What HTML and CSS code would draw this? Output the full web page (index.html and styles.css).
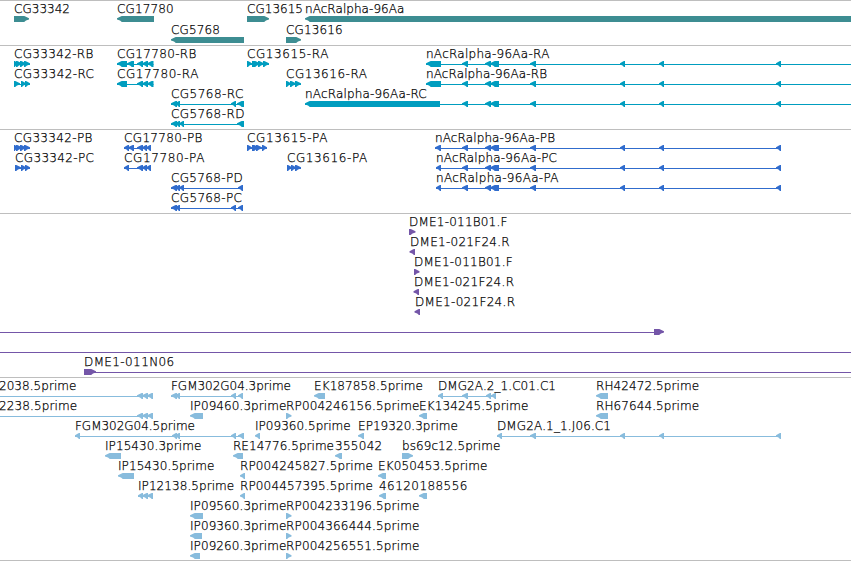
FILE: index.html
```
<!DOCTYPE html>
<html lang="en">
<head>
  <meta charset="UTF-8">
  <title>nAcRalpha-96Aa region</title>
  <link rel="stylesheet" href="styles.css">
</head>
<body>
  <main class="browser">
    <section class="track track-gene"><svg id="genes" width="851" height="44"></svg></section>
    <section class="track track-mrna"><svg id="mrna" width="851" height="83"></svg></section>
    <section class="track track-cds"><svg id="cds" width="851" height="83"></svg></section>
    <section class="track track-bac"><svg id="bac" width="851" height="163"></svg></section>
    <section class="track track-est"><svg id="est" width="851" height="182"></svg></section>
  </main>
  <script src="tracks.js"></script>
</body>
</html>
```

FILE: styles.css
```
body {
  margin: 0;
  background: #fff;
}

.browser {
  display: flex;
  flex-direction: column;
  width: 851px;
  border-bottom: 1px solid #bebebe;
  overflow: hidden;
}

.track {
  border-top: 1px solid #bebebe;
}

.track svg {
  display: block;
}

.label {
  font-family: "DejaVu Sans", sans-serif;
  font-size: 12px;
  font-weight: 200;
  fill: #000;
  stroke: #000;
  stroke-width: 0.25px;
}

.track-gene { color: #3d8d92; }
.track-mrna { color: #009dbf; }
.track-cds { color: #306ccd; }
.track-bac { color: #7456a8; }
.track-est { color: #88bcdd; }

.exon,
.intron {
  fill: currentColor;
}
```

FILE: tracks.js
```
const NS = 'http://www.w3.org/2000/svg';

// exons shared by the nAcRalpha-96Aa transcripts
const tail = [[462, 468], [485, 491], [490, 499], [530, 536], [620, 625], [659, 664], [776, 781]];
const cg17780 = [[137, 143], [142, 148], [147, 153.5]];
const cg17780p = [[137, 143], [142, 147], [146, 151]];

// [row, label, label x, label end, direction, exons, line start, line end]
const tracks = {
  genes: [
    [0, 'CG33342', 14, 69.3, 1, [[14, 29]]],
    [0, 'CG17780', 117, 173, -1, [[117, 154]]],
    [0, 'CG13615', 247, 302.3, 1, [[247, 269]]],
    [0, 'nAcRalpha-96Aa', 305, 403.7, -1, [[305, 851]]],
    [1, 'CG5768', 171, 219.3, -1, [[171, 244]]],
    [1, 'CG13616', 286, 342, 1, [[286, 301]]]
  ],
  mrna: [
    [0, 'CG33342-RB', 14, 92.7, 1, [[14, 18], [16, 22], [20, 26], [24, 30]]],
    [0, 'CG17780-RB', 117, 195.7, -1, [[117, 127], [127, 134], ...cg17780]],
    [0, 'CG13615-RA', 247, 327.7, 1, [[247, 252], [252, 260], [258, 264], [263, 269]]],
    [0, 'nAcRalpha-96Aa-RA', 426, 548.7, -1, [[426, 441], ...tail], 426, 851],
    [1, 'CG33342-RC', 14, 93.3, 1, [[14, 20], [21, 26], [25, 30]]],
    [1, 'CG17780-RA', 117, 197.7, -1, [[117, 127], ...cg17780]],
    [1, 'CG13616-RA', 286, 366.3, 1, [[286, 291], [290, 296], [295, 301]]],
    [1, 'nAcRalpha-96Aa-RB', 426, 546.3, -1, [[426, 441], ...tail], 426, 851],
    [2, 'CG5768-RC', 171, 242.7, -1, [[171, 177], [175, 180], [231, 236], [237, 244]]],
    [2, 'nAcRalpha-96Aa-RC', 305, 426, -1, [[305, 440], ...tail], 305, 851],
    [3, 'CG5768-RD', 171, 243.7, -1, [[171, 177], [175, 180], [179, 184], [237, 244]]]
  ],
  cds: [
    [0, 'CG33342-PB', 14, 91.7, 1, [[14, 18], [16, 22], [20, 26], [24, 30]]],
    [0, 'CG17780-PB', 124, 201.7, -1, [[124, 129], [128, 134], ...cg17780p]],
    [0, 'CG13615-PA', 247, 326.7, 1, [[247, 252], [252, 259], [256, 262], [262, 267]]],
    [0, 'nAcRalpha-96Aa-PB', 435, 554.3, -1, [[435, 441], ...tail]],
    [1, 'CG33342-PC', 15, 93.3, 1, [[15, 21], [21, 26], [25, 30]]],
    [1, 'CG17780-PA', 124, 203.7, -1, [[124, 129], ...cg17780p]],
    [1, 'CG13616-PA', 287, 366.5, 1, [[287, 292], [291, 296], [295, 301]]],
    [1, 'nAcRalpha-96Aa-PC', 436, 556.3, -1, [[436, 441], ...tail]],
    [2, 'CG5768-PD', 171, 242, -1, [[171, 177], [175, 180], [179, 184], [238, 243]]],
    [2, 'nAcRalpha-96Aa-PA', 436, 557.7, -1, [[436, 441], ...tail]],
    [3, 'CG5768-PC', 171, 241.3, -1, [[171, 177], [175, 180], [231, 236], [238, 243]]]
  ],
  bac: [
    [0, 'DME1-011B01.F', 409, 506.7, 1, [[409, 415.5]]],
    [1, 'DME1-021F24.R', 410, 509, -1, [[409.5, 415]]],
    [2, 'DME1-011B01.F', 414, 512, 1, [[414, 419.5]]],
    [3, 'DME1-021F24.R', 414, 513.3, -1, [[413.5, 419]]],
    [4, 'DME1-021F24.R', 415, 514.3, -1, [[414.5, 420]]],
    [5, '', 0, 0, 1, [[654, 664]], 0, 663],
    [6, '', 0, 0, 1, [], 0, 851],
    [7, 'DME1-011N06', 84, 173.5, 1, [[84, 96]], 84, 851]
  ],
  est: [
    [0, '2038.5prime', -1, 75.7, -1, [[137, 143], [142, 148], [147, 153]], 0, 153],
    [0, 'FGM302G04.3prime', 171, 290.3, -1, [[171, 177], [175, 180], [231, 236], [238, 243]]],
    [0, 'EK187858.5prime', 314, 422.3, -1, [[314, 325]]],
    [0, 'DMG2A.2_1.C01.C1', 438, 555.3, -1, [[438, 443], [462, 468], [486, 491], [491, 496]]],
    [0, 'RH42472.5prime', 596, 698.5, -1, [[596, 608]]],
    [1, '2238.5prime', -1, 76.5, -1, [[137, 143], [142, 148], [147, 153]], 0, 153],
    [1, 'IP09460.3prime', 190, 285.7, -1, [[190, 203]]],
    [1, 'RP004246156.5prime', 286, 418.7, 1, [[286, 291.5]]],
    [1, 'EK134245.5prime', 419, 527.7, -1, [[419, 427]]],
    [1, 'RH67644.5prime', 596, 698.5, -1, [[596, 608]]],
    [2, 'FGM302G04.5prime', 75, 194.3, -1, [[75, 80], [172, 177], [175, 180], [231, 236], [238, 244]]],
    [2, 'IP09360.5prime', 255, 350, -1, [[255, 260]]],
    [2, 'EP19320.3prime', 358, 457.3, -1, [[358, 364]]],
    [2, 'DMG2A.1_1.J06.C1', 497, 610.3, -1, [[497, 502], [530, 536], [620, 625], [659, 664], [776, 781]]],
    [3, 'IP15430.3prime', 105, 200.7, -1, [[105, 121]]],
    [3, 'RE14776.5prime', 233, 333.3, -1, [[233, 243]]],
    [3, '355042', 335, 381.5, -1, [[335, 342]]],
    [3, 'bs69c12.5prime', 402, 499.7, 1, [[402, 413]]],
    [4, 'IP15430.5prime', 118, 213.7, -1, [[118, 134]]],
    [4, 'RP004245827.5prime', 240, 372.3, -1, [[240, 245]]],
    [4, 'EK050453.5prime', 378, 486.7, -1, [[378, 386]]],
    [5, 'IP12138.5prime', 138, 233.5, -1, [[138, 143], [142, 148], [147, 153]]],
    [5, 'RP004457395.5prime', 240, 372.3, -1, [[240, 245]]],
    [5, '46120188556', 379, 466.7, -1, [[379, 386]]],
    [5, '', 0, 0, -1, [[419, 427]]],
    [6, 'IP09560.3prime', 190, 285.7, -1, [[190, 203]]],
    [6, 'RP004233196.5prime', 286, 418.7, 1, [[286, 291.5]]],
    [7, 'IP09360.3prime', 190, 285.7, -1, [[190, 202]]],
    [7, 'RP004366444.5prime', 286, 418.7, 1, [[286, 291.5]]],
    [8, 'IP09260.3prime', 190, 285.7, -1, [[190, 200]]],
    [8, 'RP004256551.5prime', 286, 418.7, 1, [[286, 291.5]]]
  ]
};

function add(svg, name, attrs) {
  const el = document.createElementNS(NS, name);
  for (const key in attrs) el.setAttribute(key, attrs[key]);
  svg.appendChild(el);
  return el;
}

// box with a blunt point on the strand side
function exonPoints(a, b, dir, y) {
  const head = Math.min(6, b - a);
  const tip = dir < 0 ? a : b;
  const back = dir < 0 ? b : a;
  const at = d => tip - dir * d;
  return [
    [tip, y + 2.3], [at(head * 0.6), y + 0.6], [at(head * 0.8), y], [back, y],
    [back, y + 6], [at(head * 0.8), y + 6], [at(head * 0.5), y + 4.6], [tip, y + 3.5]
  ].map(p => p.join(',')).join(' ');
}

for (const id in tracks) {
  const svg = document.getElementById(id);
  const pitch = id === 'genes' ? 21 : 20;

  tracks[id].forEach(([row, name, x, end, dir, exons, from, to]) => {
    const top = row * pitch;
    if (from === undefined) {
      from = exons[0][0];
      to = exons[exons.length - 1][1];
    }
    if (exons.length !== 1 || to > exons[0][1] || from < exons[0][0]) {
      add(svg, 'rect', { class: 'intron', x: from, y: top + 18, width: to - from, height: 1 });
    }
    exons.forEach(([a, b]) => {
      add(svg, 'polygon', { class: 'exon', points: exonPoints(a, b, dir, top + 15) });
    });
    if (name) {
      add(svg, 'text', { class: 'label', x: x, y: top + 12, textLength: end - x + 0.7 }).textContent = name;
    }
  });
}
```
